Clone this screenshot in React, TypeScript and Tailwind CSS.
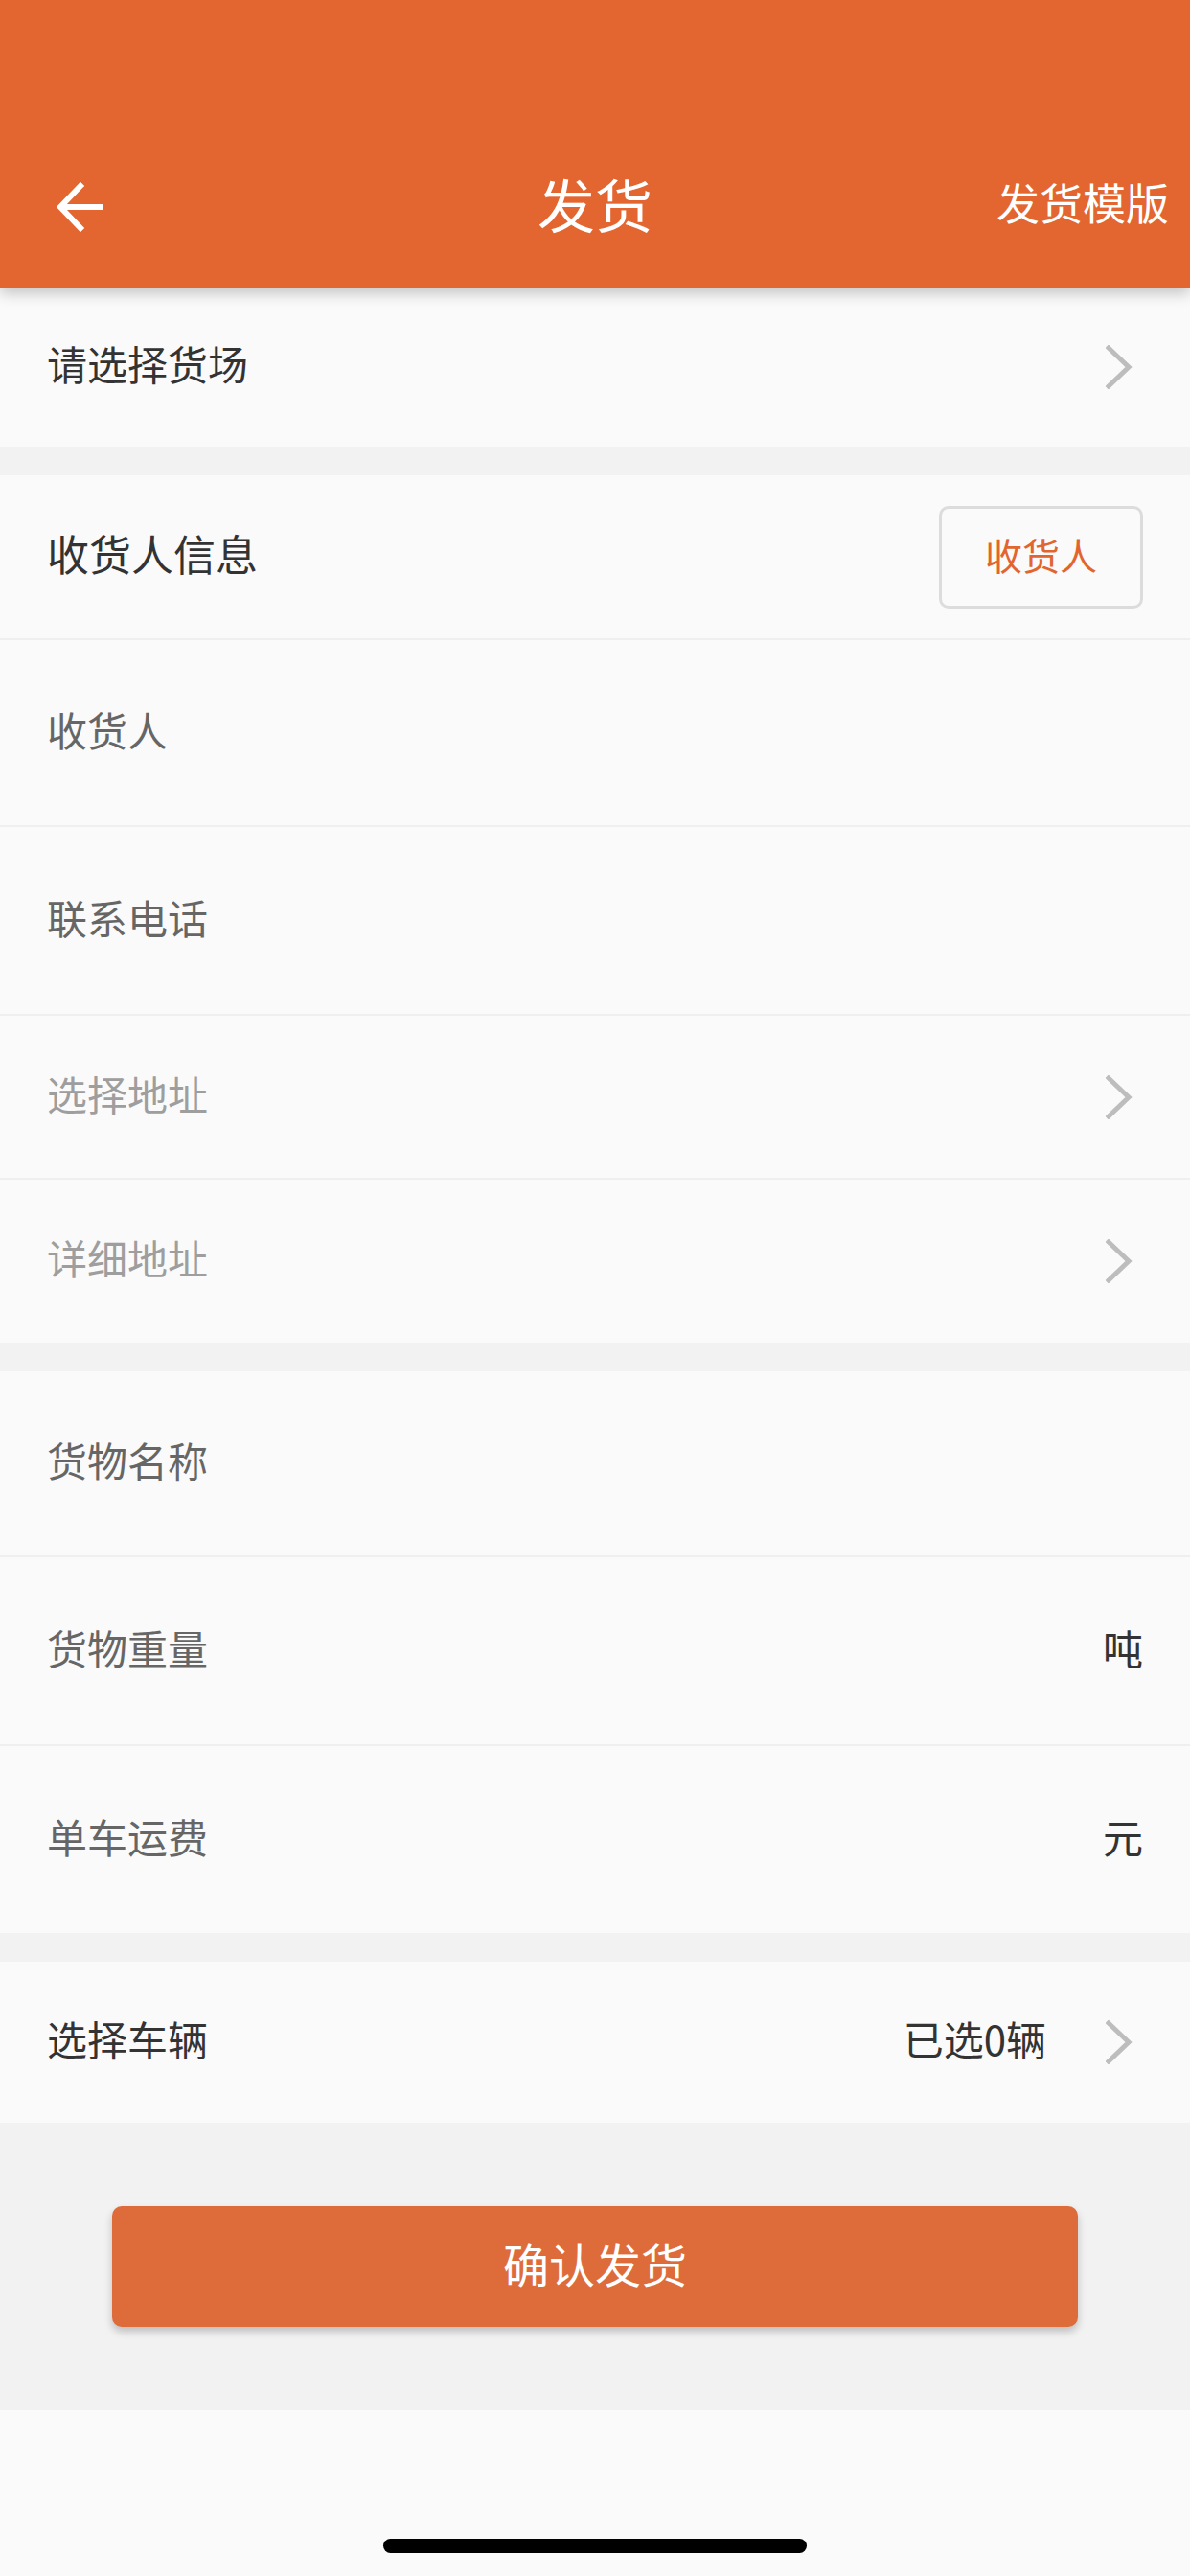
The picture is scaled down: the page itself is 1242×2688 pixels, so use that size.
import React from "react";

const Chevron = () => (
  <svg width="28" height="46" viewBox="0 0 28 46" fill="none">
    <path d="M3 3 L24 23 L3 43" stroke="#BDBDBD" strokeWidth="5" strokeLinecap="square" />
  </svg>
);

function Row({
  label,
  color,
  h,
  border = true,
  right,
}: {
  label: string;
  color: string;
  h: string;
  border?: boolean;
  right?: React.ReactNode;
}) {
  return (
    <div
      className={`flex items-center justify-between bg-[#fafafa] pl-[49px] ${h} ${
        border ? "border-b-2 border-[#efefef]" : ""
      }`}
    >
      <span className={`text-[42px] leading-none pb-[8px] ${color}`}>{label}</span>
      {right}
    </div>
  );
}

export default function App() {
  return (
    <div
      className="w-[1242px] h-[2688px] bg-[#fafafa] flex flex-col"
      style={{ fontFamily: '"Noto Sans CJK SC", "Noto Sans", sans-serif' }}
    >
      <div className="relative z-10 h-[300px] bg-[#e3652f] flex flex-col justify-end shadow-[0_6px_14px_rgba(0,0,0,0.22)]">
        <div className="relative h-[168px] flex items-center justify-center">
          <div className="absolute left-[58px] top-[58px]">
            <svg width="52" height="52" viewBox="0 0 52 52" fill="none">
              <path d="M50 26 H6" stroke="white" strokeWidth="6" />
              <path d="M26 4 L5 26 L26 48" stroke="white" strokeWidth="6" strokeLinecap="square" />
            </svg>
          </div>
          <span className="text-white text-[60px] leading-none pb-[8px]">发货</span>
          <span className="absolute right-[22px] top-[56px] text-white text-[45px] leading-none">发货模版</span>
        </div>
      </div>

      <div className="flex items-center justify-between bg-[#fafafa] pl-[49px] pr-[60px] h-[166px]">
        <span className="text-[42px] leading-none pb-[8px] text-[#333333]">请选择货场</span>
        <Chevron />
      </div>
      <div className="h-[30px] bg-[#f2f2f2]" />

      <div className="flex items-center justify-between bg-[#fafafa] pl-[49px] pr-[49px] h-[172px] border-b-2 border-[#efefef]">
        <span className="text-[44px] leading-none pb-[8px] text-[#333333]">收货人信息</span>
        <div className="w-[213px] h-[107px] rounded-[10px] border-[3px] border-[#dcdcdc] flex items-center justify-center">
          <span className="text-[39px] leading-none pb-[6px] text-[#e2652f]">收货人</span>
        </div>
      </div>
      <Row label="收货人" color="text-[#666666]" h="h-[195px]" />
      <Row label="联系电话" color="text-[#666666]" h="h-[197px]" />
      <div className="flex items-center justify-between bg-[#fafafa] pl-[49px] pr-[60px] h-[171px] border-b-2 border-[#efefef]">
        <span className="text-[42px] leading-none pb-[8px] text-[#9e9e9e]">选择地址</span>
        <Chevron />
      </div>
      <div className="flex items-center justify-between bg-[#fafafa] pl-[49px] pr-[60px] h-[170px]">
        <span className="text-[42px] leading-none pb-[8px] text-[#9e9e9e]">详细地址</span>
        <Chevron />
      </div>
      <div className="h-[30px] bg-[#f2f2f2]" />

      <Row label="货物名称" color="text-[#666666]" h="h-[194px]" />
      <div className="flex items-center justify-between bg-[#fafafa] pl-[49px] pr-[49px] h-[197px] border-b-2 border-[#efefef]">
        <span className="text-[42px] leading-none pb-[8px] text-[#666666]">货物重量</span>
        <span className="text-[42px] leading-none pb-[8px] text-[#333333]">吨</span>
      </div>
      <div className="flex items-center justify-between bg-[#fafafa] pl-[49px] pr-[49px] h-[195px]">
        <span className="text-[42px] leading-none pb-[8px] text-[#666666]">单车运费</span>
        <span className="text-[42px] leading-none pb-[8px] text-[#333333]">元</span>
      </div>
      <div className="h-[30px] bg-[#f2f2f2]" />

      <div className="flex items-center justify-between bg-[#fafafa] pl-[49px] pr-[60px] h-[168px]">
        <span className="text-[42px] leading-none pb-[8px] text-[#333333]">选择车辆</span>
        <div className="flex items-center gap-[62px]">
          <span className="text-[42px] leading-none pb-[8px] text-[#333333]">已选0辆</span>
          <Chevron />
        </div>
      </div>

      <div className="h-[300px] bg-[#f2f2f2] pt-[87px] px-[117px]">
        <div className="h-[126px] rounded-[10px] bg-[#de6c3a] flex items-center justify-center shadow-[0_5px_8px_rgba(0,0,0,0.22)]">
          <span className="text-white text-[48px] leading-none pb-[8px]">确认发货</span>
        </div>
      </div>

      <div className="flex-1 bg-[#fafafa] flex items-end justify-center pb-[24px]">
        <div className="w-[442px] h-[15px] rounded-full bg-black" />
      </div>
    </div>
  );
}
